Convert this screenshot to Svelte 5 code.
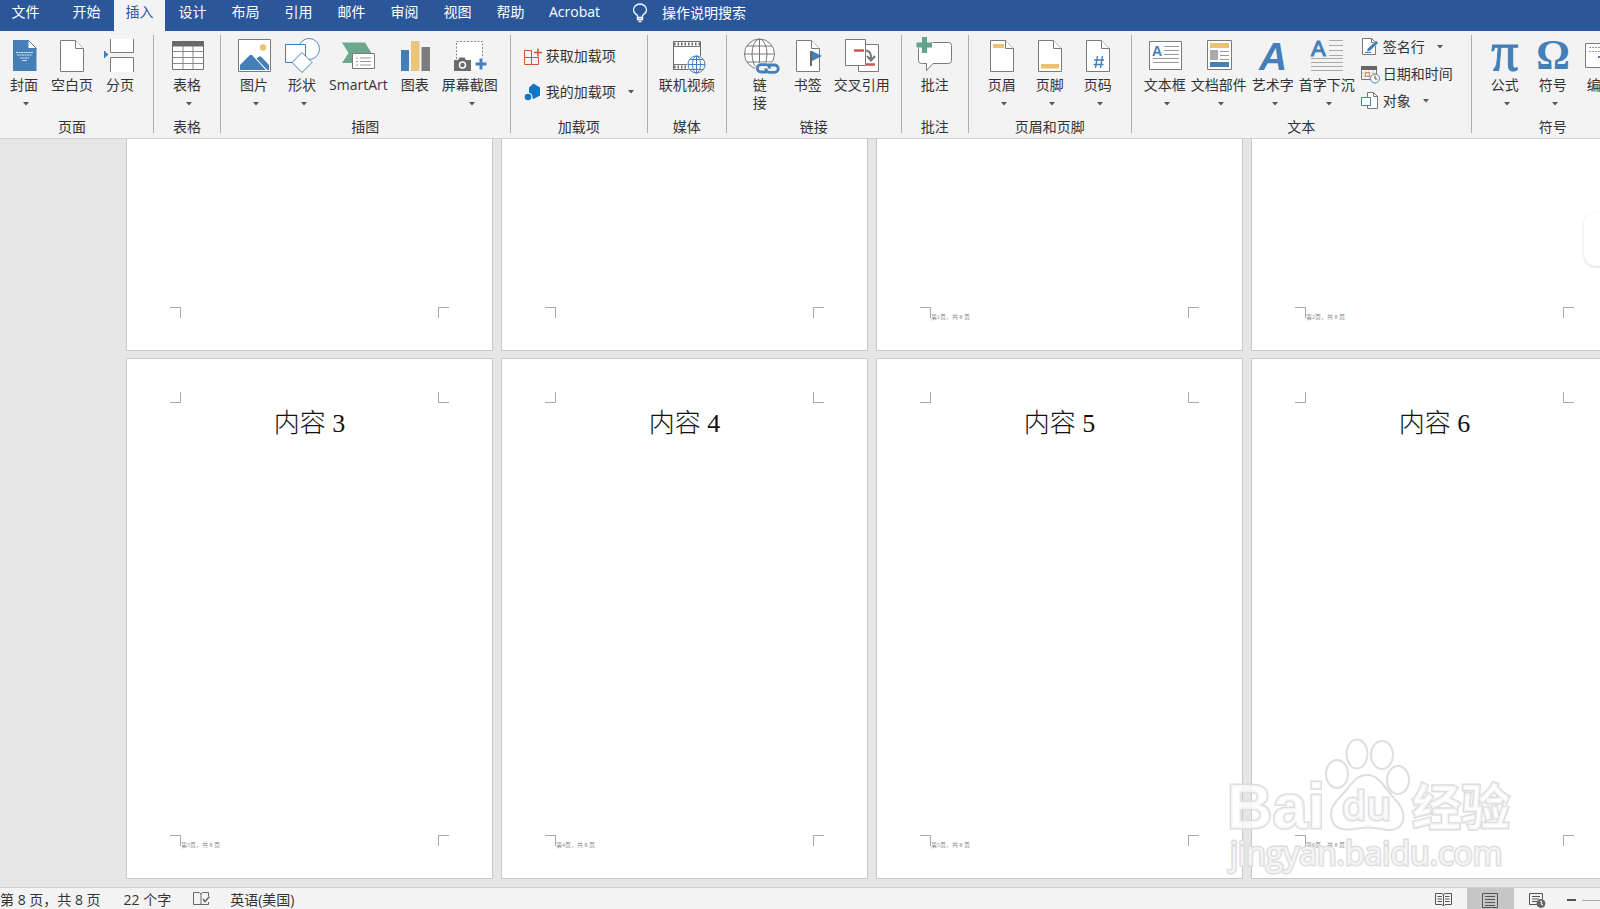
<script>
	const tabs = ['文件', '开始', '插入', '设计', '布局', '引用', '邮件', '审阅', '视图', '帮助', 'Acrobat']
	let activeTab = $state('插入')
	let activeView = $state('print')
	let zoom = $state(60)

	// big: icon over label, small: icon beside label; menu adds the drop arrow
	const groups = [
		{ name: '页面', kind: 'first', big: [
			{ icon: 'cover', label: '封面', menu: true },
			{ icon: 'blank', label: '空白页' },
			{ icon: 'break', label: '分页' },
		] },
		{ name: '表格', big: [{ icon: 'table', label: '表格', menu: true }] },
		{ name: '插图', big: [
			{ icon: 'picture', label: '图片', menu: true },
			{ icon: 'shapes', label: '形状', menu: true },
			{ icon: 'smartart', label: 'SmartArt' },
			{ icon: 'chart', label: '图表' },
			{ icon: 'screenshot', label: '屏幕截图', menu: true },
		] },
		{ name: '加载项', kind: 'addins', small: [
			{ icon: 'store', label: '获取加载项' },
			{ icon: 'addin', label: '我的加载项', menu: true },
		] },
		{ name: '媒体', kind: 'tight', big: [{ icon: 'video', label: '联机视频' }] },
		{ name: '链接', kind: 'tight', big: [
			{ icon: 'link', label: '链接', stacked: true },
			{ icon: 'bookmark', label: '书签' },
			{ icon: 'crossref', label: '交叉引用' },
		] },
		{ name: '批注', big: [{ icon: 'comment', label: '批注' }] },
		{ name: '页眉和页脚', big: [
			{ icon: 'header', label: '页眉', menu: true },
			{ icon: 'footer', label: '页脚', menu: true },
			{ icon: 'pagenum', label: '页码', menu: true },
		] },
		{ name: '文本', kind: 'tight', big: [
			{ icon: 'textbox', label: '文本框', menu: true },
			{ icon: 'parts', label: '文档部件', menu: true },
			{ icon: 'wordart', label: '艺术字', menu: true },
			{ icon: 'dropcap', label: '首字下沉', menu: true },
		], small: [
			{ icon: 'sign', label: '签名行', menu: true },
			{ icon: 'date', label: '日期和时间' },
			{ icon: 'object', label: '对象', menu: true },
		] },
		{ name: '符号', big: [
			{ icon: 'pi', label: '公式', menu: true },
			{ icon: 'omega', label: '符号', menu: true },
			{ icon: 'number', label: '编号' },
		] },
	]

	const pages = [
		{ title: '', footer: '' },
		{ title: '', footer: '' },
		{ title: '', footer: '第1页，共 8 页' },
		{ title: '', footer: '第2页，共 8 页' },
		{ title: '内容 3', footer: '第3页，共 8 页' },
		{ title: '内容 4', footer: '第4页，共 8 页' },
		{ title: '内容 5', footer: '第5页，共 8 页' },
		{ title: '内容 6', footer: '第6页，共 8 页' },
	]
</script>

{#snippet sheet()}
	<path d="M5.5 2.5h15l8 8v23h-23z" fill="#fff" stroke="#7a7a7a" />
	<path d="M20.5 2.5v8h8" fill="#fff" stroke="#7a7a7a" />
{/snippet}

{#snippet bigIcon(name)}
	<svg class="icon" width="34" height="34" viewBox="0 0 34 34" fill="none" aria-hidden="true">
		{#if name === 'cover'}
			<path d="M6 2h15l8.500 8.500V33H6z" fill="#447fb8" />
			<path d="M21 2v8.500h8.500z" fill="#fff" stroke="#447fb8" />
			<path d="M9 14.500h17M10 17h15M13 20h9" stroke="#dbe8f4" stroke-dasharray="2 .5" />
			<path d="M15 22.500h5" stroke="#c7dbee" />
		{:else if name === 'blank'}
			{@render sheet()}
		{:else if name === 'break'}
			<path d="M7.500 1v13.500h23V1M7.500 34V19.500h23V34" fill="#fff" stroke="#7a7a7a" />
			<path d="M1 12.500l4.500 4-4.500 4z" fill="#447fb8" />
		{:else if name === 'table'}
			<path d="M2.500 3.500h31v28h-31z" fill="#fff" stroke="#707070" />
			<path d="M2 3h32v5.500H2z" fill="#686868" />
			<path d="M13 8v23M23 8v23M3 13.500h30M3 19.500h30M3 25.500h30" stroke="#8a8a8a" />
		{:else if name === 'picture'}
			<path d="M1.500 1.500h32v32h-32z" fill="#fff" stroke="#7a7a7a" />
			<path d="M3 32v-5l9.500-9.500c1-1 2-1 3 0L29 32z" fill="#447fb8" />
			<path d="M19.500 20.500l2-1.500c1-1 2-1 3 0l7.500 8v5h-2z" fill="#447fb8" />
			<path d="M18.500 20.500L30 32.500" stroke="#fff" />
			<circle cx="26" cy="9.500" r="3.200" fill="#ecc270" />
		{:else if name === 'shapes'}
			<circle cx="24" cy="11" r="10.500" fill="#fff" stroke="#5a8dc0" />
			<path d="M.5 6.500h20v18H.5z" fill="#fff" stroke="#447fb8" />
			<path d="M17 14.500l10 10-10 10-10-10z" fill="#fff" stroke="#447fb8" />
		{:else if name === 'smartart'}
			<path d="M1 4.500h23l6.500 10.500-6 10H1l6.500-10z" fill="#6ca88e" />
			<path d="M11.500 15.500h22v15h-22z" fill="#fff" stroke="#7a7a7a" />
			<path d="M15 20h2M19 20h11M15 23.500h2M19 23.500h11M15 27h2M19 27h11" stroke="#999" />
		{:else if name === 'chart'}
			<path d="M3 12h8v21H3z" fill="#447fb8" />
			<path d="M13 3h8.500v30H13z" fill="#ecc47d" />
			<path d="M23.500 9h8.500v24h-8.500z" fill="#7c7c7c" />
		{:else if name === 'screenshot'}
			<path d="M3.500 3.500h26v28h-26z" fill="#fff" />
			<path d="M3.500 21V3.500h26V20" stroke="#888" stroke-dasharray="2 1.500" />
			<path d="M1 22h4l1.500-2.500h5L13 22h5v11H1z" fill="#6b6b6b" />
			<circle cx="9.500" cy="27" r="3" stroke="#fff" stroke-width="1.500" />
			<path d="M22.500 26h11M28 20.500v11" stroke="#447fb8" stroke-width="3" />
		{:else if name === 'video'}
			<path d="M3.500 3.500h27v28h-27z" fill="#fff" stroke="#6b6b6b" />
			<path d="M4 6h26M4 29h14" stroke="#6b6b6b" stroke-width="3" stroke-dasharray="1.500 2" />
			<path d="M4 8.500h26M4 26.500h16" stroke="#777" />
			<circle cx="26.500" cy="26.500" r="9.500" fill="#f3f3f3" />
			<circle cx="26.500" cy="26.500" r="8.500" fill="#fff" stroke="#447fb8" />
			<ellipse cx="26.500" cy="26.500" rx="4" ry="8.500" stroke="#447fb8" />
			<path d="M26.500 18v17M18 26.500h17M20 21.500h13M20 31.500h13" stroke="#447fb8" />
		{:else if name === 'link'}
			<circle cx="16.500" cy="16" r="15" fill="#fff" stroke="#777" />
			<ellipse cx="16.500" cy="16" rx="7.500" ry="15" stroke="#777" />
			<path d="M16.500 1v30M1.500 16h30M4 8h25M4 24h25" stroke="#777" />
			<path d="M18 27h14a3.500 3.500 0 0 1 0 7H18a3.500 3.500 0 0 1 0-7z" fill="#f3f3f3" stroke="#f3f3f3" stroke-width="5" />
			<path d="M24 34h-6a3.700 3.700 0 0 1 0-7.400h5a3.700 3.700 0 0 1 3.500 4M25 27h6.500a3.700 3.700 0 0 1 0 7.400h-5a3.700 3.700 0 0 1-3.500-4" stroke="#447fb8" stroke-width="2.800" />
		{:else if name === 'bookmark'}
			{@render sheet()}
			<path d="M20 13v15" stroke="#666" stroke-width="2" />
			<path d="M21 13l10 5-10 5z" fill="#447fb8" />
		{:else if name === 'crossref'}
			<path d="M13.500 6.500h20v27h-20z" fill="#fff" stroke="#7a7a7a" />
			<path d="M.5 1.500h20v26H.5z" fill="#fff" stroke="#7a7a7a" />
			<path d="M9 12.500h10M21 26.500h9" stroke="#c9574e" stroke-width="2.500" />
			<path d="M21 12.500c4 .5 5.500 4 5 9M22 18l4 4.500 4-4.500" stroke="#777" stroke-width="2" />
		{:else if name === 'comment'}
			<path d="M3.500 4.500h27a3 3 0 0 1 3 3v15a3 3 0 0 1-3 3H15l-6.500 7v-7h-5a3 3 0 0 1-3-3v-15a3 3 0 0 1 3-3z" fill="#fff" stroke="#7a7a7a" />
			<path d="M-1.500 7h16M6.500-1v16" stroke="#f3f3f3" stroke-width="7" />
			<path d="M-1.500 7h15.500M6.500-1v16" stroke="#63a488" stroke-width="5" />
		{:else if name === 'header'}
			{@render sheet()}
			<path d="M8 6h11v4H8z" fill="#ecc270" />
		{:else if name === 'footer'}
			{@render sheet()}
			<path d="M8 26h18v4.500H8z" fill="#ecc270" />
		{:else if name === 'pagenum'}
			{@render sheet()}
			<path d="M16.500 18l-2 12M21.500 18l-2 12M13 22h10M12.500 26.500h10" stroke="#447fb8" stroke-width="1.400" />
		{:else if name === 'textbox'}
			<path d="M1.500 3.500h32v28h-32z" fill="#fff" stroke="#7a7a7a" />
			<text x="4" y="18" font-size="14" font-weight="700" fill="#447fb8">A</text>
			<path d="M16 8.500h15M16 12.500h15M16 16.500h15M5 20.500h26M5 24.500h26" stroke="#999" />
		{:else if name === 'parts'}
			<path d="M5.500 2.500h24v29h-24z" fill="#fff" stroke="#7a7a7a" />
			<path d="M8 5h19v5H8z" fill="#ecc270" />
			<path d="M8 12h8v10H8z" fill="#aaa" />
			<path d="M18 13.500h9M18 17.500h9M18 21.500h9" stroke="#999" />
			<path d="M8 24h19v5H8z" fill="#447fb8" />
		{:else if name === 'wordart'}
			<text x="3" y="32" font-size="39" font-weight="700" font-style="italic" fill="#447fb8">A</text>
		{:else if name === 'dropcap'}
			<text x="1" y="18" font-size="22" fill="#447fb8" stroke="#447fb8">A</text>
			<path d="M19 2.500h14M19 7.500h14M19 12.500h14M19 17.500h14M1 20.500h32M1 24.500h32M1 28.500h32M1 32.500h32" stroke="#aaa" />
		{:else if name === 'pi'}
			<text class="serif" x="17" y="32" text-anchor="middle" font-size="54" font-weight="400" fill="#447fb8" stroke="#447fb8">π</text>
		{:else if name === 'omega'}
			<text class="serif" x="17" y="31" text-anchor="middle" font-size="42" font-weight="700" fill="#447fb8">Ω</text>
		{:else if name === 'number'}
			<path d="M1.500 5.500h31v24h-31z" fill="#fff" stroke="#7a7a7a" />
			<path d="M5 9.500h24M5 13.500h24" stroke="#999" stroke-dasharray="2 1" />
			<path d="M14 19h4v7" stroke="#447fb8" stroke-width="2" />
		{/if}
	</svg>
{/snippet}

{#snippet smallIcon(name)}
	<svg class="icon" width="18" height="18" viewBox="0 0 18 18" fill="none" aria-hidden="true">
		{#if name === 'store'}
			<path d="M.5 3.500h7v7h-7zM.5 10.500h7v7h-7zM7.500 10.500h7v7h-7z" stroke="#cf5436" />
			<path d="M10 5.500h8M14 1.500v8" stroke="#cf5436" stroke-width="1.500" />
		{:else if name === 'addin'}
			<path d="M9.500.5L16 4.500v8L9.500 16 5 12V4.500z" fill="#1274c4" />
			<circle cx="4" cy="14" r="4.500" fill="#f3f3f3" />
			<circle cx="4" cy="14" r="3.300" fill="#1274c4" />
		{:else if name === 'sign'}
			<path d="M1.500.5h9l4 4v12h-13z" fill="#fff" stroke="#777" />
			<path d="M10.500.5v4h4" stroke="#777" />
			<path d="M5.500 14l1-3.500 8.500-8 2.500 2.500-8.500 8z" fill="#447fb8" stroke="#fff" stroke-width=".6" />
			<path d="M4 14.500h6" stroke="#447fb8" />
		{:else if name === 'date'}
			<path d="M.5 1.500h15v13H.5z" fill="#fff" stroke="#777" />
			<path d="M0 1h16v4H0z" fill="#666" />
			<path d="M1 8h14M1 11h14M4 5v9M8 5v9M12 5v9" stroke="#ccc" />
			<path d="M4.500 7.500h4v4h-4z" stroke="#d98d4c" />
			<circle cx="14" cy="13.500" r="4.500" fill="#fff" stroke="#447fb8" />
			<path d="M14 10.500v3.500h2.500" stroke="#555" />
		{:else if name === 'object'}
			<path d="M6.500.5h6l4 4v12h-10z" fill="#fff" stroke="#777" />
			<path d="M12.500.5v4h4" stroke="#777" />
			<path d="M.5 5.500h9v8h-9z" fill="#fff" stroke="#447fb8" />
		{/if}
	</svg>
{/snippet}

{#snippet arrow()}
	<svg class="arrow" width="6" height="4" viewBox="0 0 6 4" aria-hidden="true">
		<path d="M0 0h6L3 3.500z" fill="#555" />
	</svg>
{/snippet}

<div class="window">
	<nav class="tabs">
		{#each tabs as tab}
			<button class="tab" class:active={tab === activeTab} class:file={tab === '文件'} onclick={() => (activeTab = tab)}>{tab}</button>
		{/each}
		<button class="tell">
			<svg width="16" height="20" viewBox="0 0 16 20" fill="none" stroke="#fff" stroke-width="1.300" aria-hidden="true">
				<path d="M5.500 14.500v-2C3.500 11 1.500 9.500 1.500 7a6.500 6 0 0 1 13 0c0 2.500-2 4-4 5.500v2zM5.500 14.500v2h5v-2M6.500 18.500h3" />
			</svg>
			操作说明搜索
		</button>
	</nav>

	<div class="ribbon">
		{#each groups as group}
			<section class="group {group.kind ?? ''}">
				<div class="items">
					{#each group.big ?? [] as item}
						<button class="big">
							{@render bigIcon(item.icon)}
							<span class="label" class:stacked={item.stacked}>{item.label}</span>
							{#if item.menu}{@render arrow()}{/if}
						</button>
					{/each}
					{#if group.small}
						<div class="rows">
							{#each group.small as item}
								<button class="small">
									{@render smallIcon(item.icon)}
									<span>{item.label}</span>
									{#if item.menu}{@render arrow()}{/if}
								</button>
							{/each}
						</div>
					{/if}
				</div>
				<h2>{group.name}</h2>
			</section>
			<div class="separator"></div>
		{/each}
	</div>

	<main class="canvas">
		<div class="pages">
			{#each pages as page}
				<article class="page">
					<div class="marks top"><i class="mark left"></i><i class="mark right"></i></div>
					<p class="title">{page.title}</p>
					<div class="marks bottom">
						<i class="mark left"></i>
						<small>{page.footer}</small>
						<i class="mark right"></i>
					</div>
				</article>
			{/each}
		</div>

		<svg class="watermark" width="300" height="150" viewBox="0 0 300 150" aria-hidden="true">
			<g fill="#fff" fill-opacity=".7" stroke="#dedede" stroke-width="2">
				<text class="brand" x="7" y="99" font-size="63">Bai</text>
				<ellipse cx="117" cy="45" rx="11" ry="14" />
				<ellipse cx="137" cy="25" rx="10.500" ry="14.500" />
				<ellipse cx="162" cy="26" rx="11" ry="14" />
				<ellipse cx="178" cy="51" rx="11" ry="14" />
				<path d="M147 46c13 0 18 14 27 23 8 8 11 15 9 23-3 9-12 10-21 8-9-2-19-2-28 0-11 2-20-1-22-9-3-10 2-17 9-24 9-9 14-21 26-21z" />
				<text class="sans" x="122" y="91" font-size="39">du</text>
				<text class="cjk" x="192" y="96" font-size="49">经验</text>
				<text class="url" x="10" y="136" font-size="32">jingyan.baidu.com</text>
			</g>
		</svg>
		<div class="flyout"></div>
	</main>

	<footer class="status">
		<span class="where">第 8 页，共 8 页</span>
		<span class="words">22 个字</span>
		<button class="proof" aria-label="校对">
			<svg width="17" height="14" viewBox="0 0 17 14" fill="none" stroke="#666" aria-hidden="true">
				<path d="M8 12.500V2L6.500.5h-6v12H8zM8 2L9.500.5h6V4M8 12.500h7.500V10" />
				<path d="M10 7l2 2.500 4.500-5" stroke-width="1.500" />
			</svg>
		</button>
		<span class="lang">英语(美国)</span>

		<div class="views">
			<button class:active={activeView === 'read'} aria-label="阅读视图" onclick={() => (activeView = 'read')}>
				<svg width="17" height="14" viewBox="0 0 17 14" fill="none" stroke="#555" aria-hidden="true">
					<path d="M8.500 13V1.500L7 .5H.5v11H7l1.500 1.500 1.500-1.500h6.500V.5H10L8.500 1.500M2.500 3.500H7M2.500 6H7M2.500 8.500H7M10 3.500h4.500M10 6h4.500M10 8.500h4.500" />
				</svg>
			</button>
			<button class:active={activeView === 'print'} aria-label="页面视图" onclick={() => (activeView = 'print')}>
				<svg width="17" height="15" viewBox="0 0 17 15" fill="none" stroke="#555" aria-hidden="true">
					<path d="M.5.5h15v14H.5zM3 3.500h10M3 6.500h10M3 9.500h10M3 12.500h10" />
				</svg>
			</button>
			<button class:active={activeView === 'web'} aria-label="Web 版式视图" onclick={() => (activeView = 'web')}>
				<svg width="17" height="15" viewBox="0 0 17 15" fill="none" stroke="#555" aria-hidden="true">
					<path d="M8 11.500H.5V.5h13V6M3 3.500h8M3 6h7M3 8.500h5" />
					<circle cx="12" cy="10.500" r="4" fill="#666" stroke="#666" />
					<path d="M11 8l2 1-1 2 2 1" stroke="#fff" />
				</svg>
			</button>
			<button class="minus" aria-label="缩小" onclick={() => (zoom -= 10)}>
				<svg width="9" height="2" viewBox="0 0 9 2" aria-hidden="true"><path d="M0 0h9v2H0z" fill="#555" /></svg>
			</button>
			<div class="slider">
				<input type="range" min="10" max="200" bind:value={zoom} aria-label="缩放" />
			</div>
		</div>
	</footer>
</div>

<style>
	:global(body) {
		margin: 0;
		overflow: hidden;
	}

	.window {
		display: flex;
		flex-direction: column;
		height: 100vh;
		overflow: hidden;
		font-family: "Open Sans", "Noto Sans CJK SC", sans-serif;
		font-size: 14px;
		line-height: 18px;
		color: #333;
		background: #f3f3f3;
	}

	button {
		padding: 0;
		border: 0;
		background: none;
		font: inherit;
		color: inherit;
		white-space: nowrap;
	}

	.tabs {
		display: flex;
		flex-shrink: 0;
		gap: 2px;
		height: 31px;
		background: #2b579a;
		color: #fff;
	}

	.tab {
		min-width: 51px;
		padding: 0 11px 8px;
	}

	.tab.file {
		margin-right: 8px;
	}

	.tab.active {
		background: #f3f3f3;
		color: #2b579a;
	}

	.tell {
		display: flex;
		align-items: center;
		gap: 14px;
		margin-left: 19px;
		padding-bottom: 6px;
	}

	.ribbon {
		display: flex;
		flex-shrink: 0;
		height: 107px;
		border-bottom: 1px solid #d2d2d2;
		overflow: hidden;
	}

	.group {
		display: flex;
		flex-direction: column;
		flex-shrink: 0;
		padding: 5px 9px 0;
	}

	.group.first {
		padding-left: 0;
	}

	.items {
		display: flex;
		flex: 1;
	}

	h2 {
		margin: 0;
		padding-bottom: 2px;
		font-size: 14px;
		font-weight: 400;
		text-align: center;
	}

	.separator {
		flex-shrink: 0;
		width: 1px;
		margin: 4px 0 5px;
		background: #adadad;
	}

	.icon {
		flex-shrink: 0;
		overflow: visible;
		font-family: "Liberation Sans", sans-serif;
	}

	.serif {
		font-family: "Liberation Serif", serif;
	}

	.big {
		display: flex;
		flex-direction: column;
		align-items: center;
		min-width: 48px;
		padding: 2px 3px 0;
	}

	.tight .big {
		padding: 2px 2px 0;
	}

	.label {
		margin-top: 4px;
	}

	.label.stacked {
		width: 14px;
		white-space: normal;
	}

	.big .arrow {
		margin: 8px 0 0 4px;
	}

	.rows {
		display: flex;
		flex-direction: column;
		gap: 9px;
		min-width: 105px;
		padding-top: 2px;
	}

	.addins .rows {
		gap: 18px;
		min-width: 118px;
		padding-top: 11px;
	}

	.small {
		display: flex;
		align-items: center;
		gap: 4px;
		padding-left: 4px;
	}

	.small .arrow {
		margin-left: 8px;
	}

	.canvas {
		position: relative;
		display: flex;
		flex: 1;
		flex-direction: column;
		justify-content: flex-end;
		min-height: 0;
		padding: 0 0 8px 126px;
		overflow: hidden;
		background: #e6e6e6;
	}

	.pages {
		display: grid;
		grid-template-columns: repeat(4, 367px);
		gap: 7px 8px;
	}

	.page {
		display: flex;
		flex-direction: column;
		box-sizing: border-box;
		height: 521px;
		border: 1px solid #c8c8c8;
		background: #fff;
	}

	.marks {
		display: flex;
		padding: 0 43px;
	}

	.marks.top {
		padding-top: 33px;
	}

	.marks.bottom {
		height: 43px;
		margin-top: auto;
	}

	.mark {
		box-sizing: border-box;
		width: 11px;
		height: 11px;
		border: 0 solid #aaa;
	}

	.mark.left {
		border-right-width: 1px;
	}

	.mark.right {
		margin-left: auto;
		border-left-width: 1px;
	}

	.top .mark {
		border-bottom-width: 1px;
	}

	.bottom .mark {
		border-top-width: 1px;
	}

	.title {
		margin: 5px 0 0;
		font-family: "Liberation Serif", "Noto Sans CJK SC", serif;
		font-size: 26px;
		font-weight: 300;
		line-height: 32px;
		text-align: center;
		color: #111;
	}

	small {
		margin-top: 6px;
		font-family: "Liberation Serif", "Noto Sans CJK SC", serif;
		font-size: 6px;
		line-height: 8px;
		color: #888;
	}

	.watermark {
		position: absolute;
		right: 80px;
		bottom: 8px;
	}

	.watermark text {
		paint-order: stroke;
		stroke-width: 3px;
	}

	.brand {
		font-family: "Liberation Sans", sans-serif;
		font-weight: 700;
	}

	.sans {
		font-family: "Open Sans", sans-serif;
		font-weight: 600;
	}

	.url {
		font-family: "Open Sans", sans-serif;
		font-weight: 500;
	}

	.cjk {
		font-family: "Noto Sans CJK SC", sans-serif;
		font-weight: 700;
	}

	.flyout {
		position: absolute;
		top: 73px;
		right: -40px;
		width: 56px;
		height: 54px;
		border-radius: 12px;
		background: #fff;
		box-shadow: 0 1px 3px rgba(0, 0, 0, 0.16);
	}

	.status {
		display: flex;
		flex-shrink: 0;
		height: 21px;
		border-top: 1px solid #cfcfcf;
		white-space: nowrap;
	}

	.status > span {
		padding-top: 3px;
	}

	.words {
		margin-left: 23px;
	}

	.proof {
		display: flex;
		align-items: center;
		margin: 0 20px 0 22px;
	}

	.views {
		display: flex;
		margin-left: auto;
	}

	.views button {
		display: flex;
		align-items: center;
		justify-content: center;
		width: 47px;
		padding-top: 3px;
	}

	.views button.active {
		background: #c6c6c6;
	}

	.views .minus {
		width: 21px;
	}

	.slider {
		width: 18px;
		padding-top: 3px;
		overflow: hidden;
	}

	input {
		width: 100px;
		height: 18px;
		margin: 0;
		appearance: none;
		background: linear-gradient(#aaa, #aaa) center / 100% 1px no-repeat;
	}

	input::-webkit-slider-thumb {
		appearance: none;
		width: 5px;
		height: 12px;
		background: #555;
	}
</style>
